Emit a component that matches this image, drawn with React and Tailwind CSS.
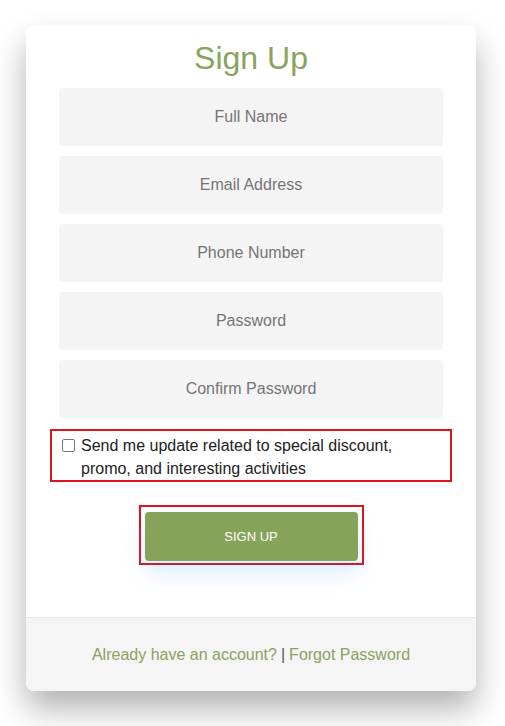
import React from "react";

export default function App() {
  const fields = ["Full Name", "Email Address", "Phone Number", "Password", "Confirm Password"];
  return (
    <div className="min-h-[726px] w-[505px] bg-white pt-[25px] pl-[26px]" style={{ fontFamily: '"Liberation Sans", Arial, sans-serif' }}>
      <div className="w-[450px] h-[666px] bg-white rounded-[8px] overflow-hidden shadow-[0_18px_32px_rgba(0,0,0,0.3)] flex flex-col">
        <div className="flex-1 flex flex-col items-center pt-[15px]">
          <h1 className="text-[32px] leading-[37px] text-[#87a35e] font-normal">Sign Up</h1>
          <div className="mt-[11px] flex flex-col gap-[10px] w-[384px]">
            {fields.map((f) => (
              <div key={f} className="h-[58px] rounded-[4px] bg-[#f4f4f4] flex items-center justify-center text-[16px] text-[#757575]">
                {f}
              </div>
            ))}
          </div>
          <div className="mt-[11px] w-[402px] h-[53px] border-2 border-[#e0141e] flex items-start pl-[10px] pr-[50px] pt-[3px]">
            <span className="mt-[5px] w-[13px] h-[13px] border border-[#767676] rounded-[2px] shrink-0 bg-white"></span>
            <span className="ml-[6px] text-[16px] leading-[23px] text-[#222]">
              Send me update related to special discount, promo, and interesting activities
            </span>
          </div>
          <div className="mt-[23px] border-2 border-[#e0141e] px-[4px] pt-[5px] pb-[2px]">
            <div className="w-[213px] h-[49px] bg-[#86a35a] rounded-[4px] flex items-center justify-center text-white text-[13px] shadow-[0_12px_22px_rgba(0,130,255,0.15)]">
              SIGN UP
            </div>
          </div>
        </div>
        <div className="h-[74px] border-t border-[#e6e6e6] bg-[#f5f5f5] flex items-center justify-center text-[16px]">
          <span className="text-[#87a35e]">Already have an account?</span>
          <span className="text-[#555] mx-[4px]">|</span>
          <span className="text-[#87a35e]">Forgot Password</span>
        </div>
      </div>
    </div>
  );
}
